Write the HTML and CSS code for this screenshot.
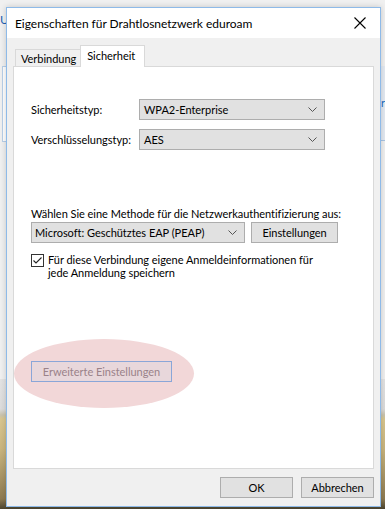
FILE: index.html
```html
<!DOCTYPE html>
<html lang="de">
<head>
    <meta charset="UTF-8">
    <meta name="viewport" content="width=device-width, initial-scale=1.0">
    <title>Eigenschaften für Drahtlosnetzwerk eduroam</title>
    <link rel="stylesheet" href="styles.css">
</head>
<body>
    <div class="desktop">
        <div class="back-window">
            <div class="back-title">U</div>
            <div class="back-panel"></div>
            <div class="back-right"><span>r</span></div>
        </div>
        <div class="wallpaper"></div>
    </div>

    <div class="dialog">
        <div class="titlebar">
            <span class="title">Eigenschaften für Drahtlosnetzwerk eduroam</span>
            <svg class="close" width="12" height="12" viewBox="0 0 12 12">
                <path d="M0.5 0.5 L11.5 11.5 M11.5 0.5 L0.5 11.5" stroke="#000" stroke-width="1.1" fill="none"/>
            </svg>
        </div>

        <div class="content">
            <div class="tabs">
                <div class="tab">Verbindung</div>
                <div class="tab active">Sicherheit</div>
            </div>

            <div class="panel">
                <div class="field-row first">
                    <span class="label">Sicherheitstyp:</span>
                    <div class="select wide">
                        <span>WPA2-Enterprise</span>
                        <svg class="arrow" width="9" height="5" viewBox="0 0 9 5"><path d="M0.5 0.5 L4.5 4.5 L8.5 0.5" stroke="#555" fill="none"/></svg>
                    </div>
                </div>
                <div class="field-row">
                    <span class="label">Verschlüsselungstyp:</span>
                    <div class="select wide">
                        <span>AES</span>
                        <svg class="arrow" width="9" height="5" viewBox="0 0 9 5"><path d="M0.5 0.5 L4.5 4.5 L8.5 0.5" stroke="#555" fill="none"/></svg>
                    </div>
                </div>

                <div class="method">
                    <div class="method-label">Wählen Sie eine Methode für die Netzwerkauthentifizierung aus:</div>
                    <div class="method-row">
                        <div class="select method-select">
                            <span>Microsoft: Geschütztes EAP (PEAP)</span>
                            <svg class="arrow" width="9" height="5" viewBox="0 0 9 5"><path d="M0.5 0.5 L4.5 4.5 L8.5 0.5" stroke="#555" fill="none"/></svg>
                        </div>
                        <div class="button settings">Einstellungen</div>
                    </div>
                    <div class="check-row">
                        <svg class="checkbox" width="13" height="13" viewBox="0 0 13 13">
                            <rect x="0.5" y="0.5" width="12" height="12" fill="#fff" stroke="#333"/>
                            <path d="M2.5 6.5 L5 9 L10.5 3.5" stroke="#222" stroke-width="1.1" fill="none"/>
                        </svg>
                        <span>Für diese Verbindung eigene Anmeldeinformationen für<br>jede Anmeldung speichern</span>
                    </div>
                </div>

                <div class="advanced">
                    <div class="highlight"></div>
                    <div class="button disabled">Erweiterte Einstellungen</div>
                </div>
            </div>

            <div class="footer">
                <div class="button footer-btn">OK</div>
                <div class="button footer-btn">Abbrechen</div>
            </div>
        </div>
    </div>
</body>
</html>
```

FILE: styles.css
```css
html, body {
    margin: 0;
    padding: 0;
}
body {
    width: 385px;
    height: 509px;
    overflow: hidden;
    position: relative;
    background: #f0f0f0;
    font-family: Lato, "Noto Sans", sans-serif;
    font-size: 11px;
    letter-spacing: -0.03px;
    color: #000;
}

/* background desktop */
.desktop {
    position: absolute;
    inset: 0;
}
.back-window {
    position: absolute;
    left: 0;
    top: 0;
    width: 385px;
    height: 379px;
    background: #f0f0f0;
}
.back-title {
    position: absolute;
    left: 0;
    top: 12px;
    color: #1a5fb4;
    font-size: 12px;
}
.back-panel {
    position: absolute;
    left: 2px;
    top: 66px;
    width: 10px;
    height: 74px;
    background: #fff;
    border: 1px solid #b9cfe8;
}
.back-right {
    position: absolute;
    left: 380px;
    top: 66px;
    width: 5px;
    height: 74px;
    background: #e4eaf2;
    border-left: 1px solid #a9c4e3;
    border-bottom: 1px solid #a9c4e3;
    overflow: hidden;
}
.back-right span {
    position: absolute;
    left: 0;
    top: 30px;
    color: #1a6fc4;
    font-size: 11px;
}
.wallpaper {
    position: absolute;
    left: 0;
    top: 379px;
    width: 385px;
    height: 130px;
    background: linear-gradient(to bottom, #e3e3e3 0, #dcdcdc 30px, #c9c3ae 36px, #d8c690 40px, #c9b57e 70px, #8e7b52 120px, #4a4430 130px);
}

/* dialog window */
.dialog {
    position: absolute;
    left: 6px;
    top: 7px;
    width: 373px;
    height: 498px;
    border: 1px solid #8ebae8;
    background: #f0f0f0;
    display: flex;
    flex-direction: column;
    box-shadow: 0 0 6px rgba(0, 0, 0, 0.18);
}
.titlebar {
    height: 30px;
    background: #fff;
    display: flex;
    align-items: center;
    justify-content: space-between;
    padding: 0 14px 0 8px;
}
.title {
    font-size: 12px;
    color: #000;
}
.content {
    flex: 1;
    padding: 8px 6px 0 6px;
    display: flex;
    flex-direction: column;
}

.tabs {
    display: flex;
    align-items: flex-end;
    height: 20px;
    padding-left: 2px;
    position: relative;
    z-index: 1;
}
.tab {
    height: 16px;
    padding: 0 4px 0 5px;
    border: 1px solid #d9d9d9;
    border-bottom: none;
    border-right: none;
    background: #f0f0f0;
    line-height: 18px;
}
.tab.active {
    height: 21px;
    margin-bottom: -1px;
    padding: 0 9px 0 6px;
    background: #fff;
    border-right: 1px solid #d9d9d9;
    line-height: 19px;
}

.panel {
    height: 401px;
    background: #fff;
    border: 1px solid #d9d9d9;
    padding: 0 0 0 17px;
    position: relative;
}
.field-row {
    display: flex;
    align-items: center;
    margin-top: 9px;
}
.field-row.first {
    margin-top: 32px;
}
.label {
    width: 108px;
}
.select {
    height: 19px;
    background: #e1e1e1;
    border: 1px solid #adadad;
    display: flex;
    align-items: center;
    justify-content: space-between;
    padding: 0 7px 0 4px;
    box-sizing: content-box;
}
.select.wide {
    width: 173px;
}
.arrow {
    display: block;
}

.method {
    margin-top: 57px;
}
.method-label {
    line-height: 14px;
}
.method-row {
    display: flex;
    gap: 6px;
    margin-top: 1px;
}
.method-select {
    width: 202px;
    padding-left: 3px;
}
.button {
    height: 19px;
    background: #e1e1e1;
    border: 1px solid #adadad;
    display: flex;
    align-items: center;
    justify-content: center;
    box-sizing: content-box;
}
.settings {
    width: 85px;
}
.check-row {
    display: flex;
    gap: 4px;
    margin-top: 10px;
    line-height: 13px;
}
.checkbox {
    flex: none;
    margin-top: 1px;
}

.advanced {
    margin-top: 82px;
    position: relative;
}
.highlight {
    position: absolute;
    left: -17px;
    top: -22px;
    width: 180px;
    height: 69px;
    border-radius: 50%;
    background: #f2d7d8;
}
.button.disabled {
    position: relative;
    width: 139px;
    background: rgba(225, 215, 222, 0.6);
    border: 1px solid #8aa6d8;
    color: #9a8289;
}

.footer {
    display: flex;
    justify-content: flex-end;
    gap: 8px;
    margin-top: 8px;
}
.footer-btn {
    width: 71px;
}
```
